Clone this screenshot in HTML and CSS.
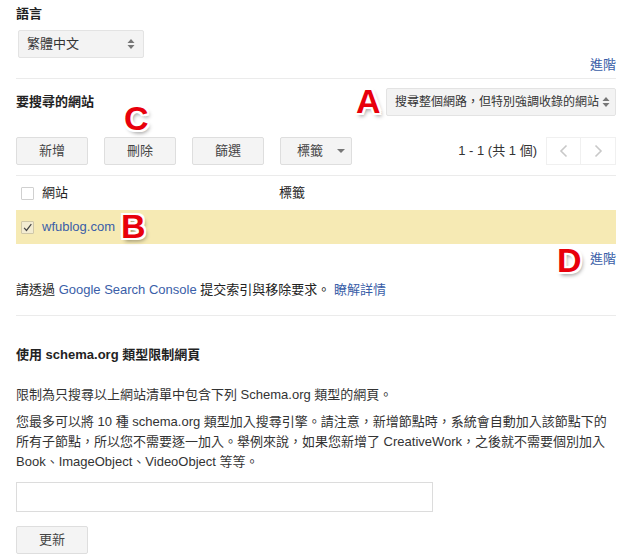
FILE: index.html
```html
<!DOCTYPE html>
<html lang="zh-Hant">
<head>
    <meta charset="utf-8" />
    <link rel="stylesheet" href="styles.css">
    <title>搜尋引擎設定</title>
</head>
<body>
<div id="main">
    <div class="label">語言</div>
    <div class="sel sel-lang">
        <span>繁體中文</span>
        <svg class="updown" width="8" height="12" viewBox="0 0 8 12"><path d="M4 1L7.5 5H0.5Z M4 11L0.5 7H7.5Z" fill="#777"/></svg>
    </div>
    <div class="adv adv-top"><a href="javascript:void(0)">進階</a></div>
    <div class="hr"></div>

    <div class="sites-head">
        <div class="label">要搜尋的網站</div>
        <div class="sel sel-scope">
            <span>搜尋整個網路，但特別強調收錄的網站</span>
            <svg class="updown" width="8" height="12" viewBox="0 0 8 12"><path d="M4 1L7.5 5H0.5Z M4 11L0.5 7H7.5Z" fill="#777"/></svg>
        </div>
    </div>

    <div class="toolbar">
        <a class="btn" href="javascript:void(0)">新增</a>
        <a class="btn" href="javascript:void(0)">刪除</a>
        <a class="btn" href="javascript:void(0)">篩選</a>
        <a class="btn btn-menu" href="javascript:void(0)">標籤<i class="caret"></i></a>
        <div class="pager">
            <span class="count">1 - 1 (共 1 個)</span>
            <a class="pg" href="javascript:void(0)"><svg width="10" height="14" viewBox="0 0 10 14"><path d="M7.5 1.5L2 7l5.5 5.5" fill="none" stroke="#c8c8c8" stroke-width="1.6"/></svg></a>
            <a class="pg" href="javascript:void(0)"><svg width="10" height="14" viewBox="0 0 10 14"><path d="M2.5 1.5L8 7l-5.5 5.5" fill="none" stroke="#c8c8c8" stroke-width="1.6"/></svg></a>
        </div>
    </div>
    <div class="hr hr-list"></div>

    <div class="row row-head">
        <span class="cb"></span>
        <span class="col-site">網站</span>
        <span class="col-tag">標籤</span>
    </div>
    <div class="row row-sel">
        <span class="cb cb-on"><svg width="13" height="13" viewBox="0 0 13 13"><path d="M2.5 7l2.8 3L11 2.5" fill="none" stroke="#444" stroke-width="1.4"/></svg></span>
        <a class="col-site" href="javascript:void(0)">wfublog.com</a>
    </div>
    <div class="adv adv-mid"><a href="javascript:void(0)">進階</a></div>

    <p class="note">請透過 <a href="javascript:void(0)">Google Search Console</a> 提交索引與移除要求。 <a href="javascript:void(0)">瞭解詳情</a></p>
    <div class="hr hr-schema"></div>

    <div class="label schema-title">使用 schema.org 類型限制網頁</div>
    <p class="desc">限制為只搜尋以上網站清單中包含下列 Schema.org 類型的網頁。</p>
    <p class="desc desc-long">您最多可以將 10 種 schema.org 類型加入搜尋引擎。請注意，新增節點時，系統會自動加入該節點下的所有子節點，所以您不需要逐一加入。舉例來說，如果您新增了 CreativeWork，之後就不需要個別加入 Book、ImageObject、VideoObject 等等。</p>
    <input class="f-text" type="text" value="" />
    <a class="btn btn-update" href="javascript:void(0)">更新</a>

    <span class="mark mark-a">A</span>
    <span class="mark mark-b">B</span>
    <span class="mark mark-c">C</span>
    <span class="mark mark-d">D</span>
</div>
</body>
</html>
```

FILE: styles.css
```css
*{margin:0;padding:0;box-sizing:border-box;}
body{font:13px/20px "Liberation Sans","Noto Sans CJK TC",sans-serif;color:#222;background:#fff;}
a{color:#3a5ea8;text-decoration:none;}
#main{position:relative;width:616px;padding:4px 0 0 16px;}
.label{font-weight:700;color:#222;line-height:20px;}
.hr{height:1px;background:#ebebeb;}

.sel{display:flex;align-items:center;justify-content:space-between;height:28px;padding:0 8px 0 8px;background:#f3f3f3;border:1px solid #e3e3e3;border-radius:2px;color:#333;white-space:nowrap;}
.sel-lang{width:126px;margin:6px 0 0 2px;}
.sel-scope{width:230px;padding:0 5px 0 8px;font-size:12px;}
.updown{flex:none;}

.adv{text-align:right;}
.adv-top{line-height:14px;margin-bottom:6px;}
.adv-mid{margin-top:5px;}

.sites-head{display:flex;justify-content:space-between;align-items:center;margin-top:9px;height:28px;}

.toolbar{display:flex;align-items:center;gap:16px;margin-top:21px;height:28px;}
.btn{display:flex;align-items:center;justify-content:center;width:72px;height:28px;background:#f4f4f4;border:1px solid #dedede;border-radius:2px;color:#444;white-space:nowrap;}
.btn-menu{justify-content:flex-start;padding-left:16px;gap:14px;}
.caret{flex:none;width:0;height:0;border-left:4px solid transparent;border-right:4px solid transparent;border-top:4px solid #777;}
.pager{display:flex;align-items:center;margin-left:auto;}
.count{color:#333;margin-right:9px;}
.pg{display:flex;align-items:center;justify-content:center;width:35px;height:28px;border:1px solid #f0f0f0;background:#fff;}
.pg + .pg{border-left:0;}

.hr-list{margin-top:10px;}
.row{display:flex;align-items:center;height:34px;padding-left:5px;}
.cb{display:flex;align-items:center;justify-content:center;width:13px;height:13px;border:1px solid #d0d0d0;border-radius:1px;background:#fff;}
.cb-on{background:#f3ecd2;border-color:#cfc7a8;}
.col-site{margin-left:8px;width:237px;}
.row-sel{background:#f6eab4;}

.note{margin-top:11px;}
.hr-schema{margin-top:15px;}
.schema-title{margin-top:29px;}
.desc{margin-top:20px;color:#333;width:600px;}
.desc-long{margin-top:7px;}
.f-text{display:block;width:417px;height:30px;margin-top:10px;border:1px solid #dcdcdc;background:#fff;}
.btn-update{margin-top:14px;}

.mark{position:absolute;font:700 34px/34px "Liberation Sans",sans-serif;color:#e8000b;text-shadow:-2px -2px 0 #fff,2px -2px 0 #fff,-2px 2px 0 #fff,2px 2px 0 #fff,0 -2px 0 #fff,0 2px 0 #fff,-2px 0 0 #fff,2px 0 0 #fff,2px 3px 4px rgba(0,0,0,.45);}
.mark-a{left:356px;top:84px;}
.mark-b{left:121px;top:209px;}
.mark-c{left:124px;top:101px;}
.mark-d{left:557px;top:243px;}
```
